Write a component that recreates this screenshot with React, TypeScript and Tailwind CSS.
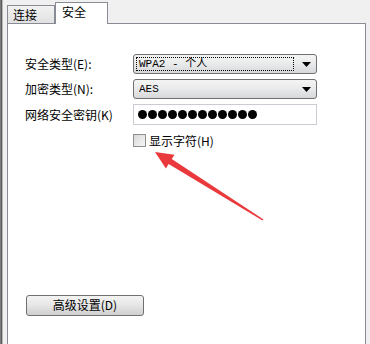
import React from 'react';

const font = { fontFamily: '"Noto Sans CJK SC", "DejaVu Sans", sans-serif' };

const Caret = () => (
  <svg width="9" height="5" viewBox="0 0 9 5" className="shrink-0">
    <path d="M0 0 H9 L4.5 5 Z" fill="#000" />
  </svg>
);

const ComboBox: React.FC<{ value: string; focused?: boolean }> = ({ value, focused }) => (
  <div className="h-[20px] w-[184px] rounded-[3px] border border-[#707070] bg-gradient-to-b from-[#f4f4f4] via-[#e9eaeb] to-[#d6d8db] flex items-center pl-[2px] pr-[5px]">
    <div
      className={`flex-1 h-[14px] flex items-center px-[2px] mr-[8px] ${
        focused ? 'border border-dotted border-black' : 'border border-transparent'
      }`}
    >
      <span className="text-[11px] leading-none text-black whitespace-pre" style={{ fontFamily: '"Liberation Mono", "Noto Sans CJK SC", monospace' }}>
        {value}
      </span>
    </div>
    <Caret />
  </div>
);

const FormRow: React.FC<{ label: string; children: React.ReactNode }> = ({ label, children }) => (
  <div className="flex items-center">
    <span className="w-[108px] text-[12px] leading-none text-black">{label}</span>
    {children}
  </div>
);

const App: React.FC = () => {
  return (
    <div className="w-[370px] h-[344px] bg-[#f0f0f0] relative overflow-hidden flex" style={font}>
      {/* dialog edge */}
      <div className="w-[3px] h-full flex">
        <div className="w-[1px] bg-[#7a7a7a]" />
        <div className="w-[1px] bg-[#5c5c5c]" />
        <div className="w-[1px] bg-[#b9b9b9]" />
      </div>

      <div className="flex flex-col pl-[4px] pt-[1px]">
        {/* tabs */}
        <div className="h-[22px] flex items-end relative z-10">
          <div className="w-[48px] h-[18px] border border-b-0 border-[#898c95] bg-gradient-to-b from-[#f2f2f2] to-[#e1e1e1] flex items-center pl-[5px]">
            <span className="text-[12px] leading-none text-black">连接</span>
          </div>
          <div className="w-[53px] h-[22px] -mb-[1px] border border-b-0 border-[#898c95] bg-white flex items-start pt-[3px] pl-[6px]">
            <span className="text-[12px] leading-none text-black">安全</span>
          </div>
        </div>

        {/* panel */}
        <div className="w-[359px] flex-1 bg-white border border-[#898c95] border-b-0 pt-[30px] pl-[17px] flex flex-col">
          <div className="flex flex-col gap-[5px]">
            <FormRow label="安全类型(E):">
              <ComboBox value="WPA2 - 个人" focused />
            </FormRow>
            <FormRow label="加密类型(N):">
              <ComboBox value="AES" />
            </FormRow>
            <FormRow label="网络安全密钥(K)">
              <div className="h-[21px] w-[184px] border border-[#c9cdd3] bg-white flex items-center pl-[4px] gap-[1px]">
                {Array.from({ length: 12 }).map((_, i) => (
                  <span key={i} className="w-[9px] h-[9px] rounded-full bg-black" />
                ))}
              </div>
            </FormRow>
          </div>

          <div className="flex items-center mt-[9px] ml-[108px] gap-[3px]">
            <span className="w-[13px] h-[13px] border border-[#8e8f8f] bg-gradient-to-br from-[#d8d8d8] to-[#f6f6f6]" />
            <span className="text-[12px] leading-none text-black">显示字符(H)</span>
          </div>

          <div className="mt-[144px] ml-[1px]">
            <button className="w-[118px] h-[21px] rounded-[3px] border border-[#707070] bg-gradient-to-b from-[#f3f3f3] via-[#e6e6e6] to-[#cfcfcf] text-[12px] leading-none text-black">
              高级设置(D)
            </button>
          </div>
        </div>
      </div>

      {/* annotation arrow */}
      <svg className="absolute left-0 top-0 pointer-events-none" width="370" height="344" viewBox="0 0 370 344">
        <polygon
          points="155,152 174.5,154.8 171.8,159.1 263.5,219.5 262.5,220.5 168.6,164.1 165.9,168.4"
          fill="#e9393d"
        />
      </svg>
    </div>
  );
};

export default App;
